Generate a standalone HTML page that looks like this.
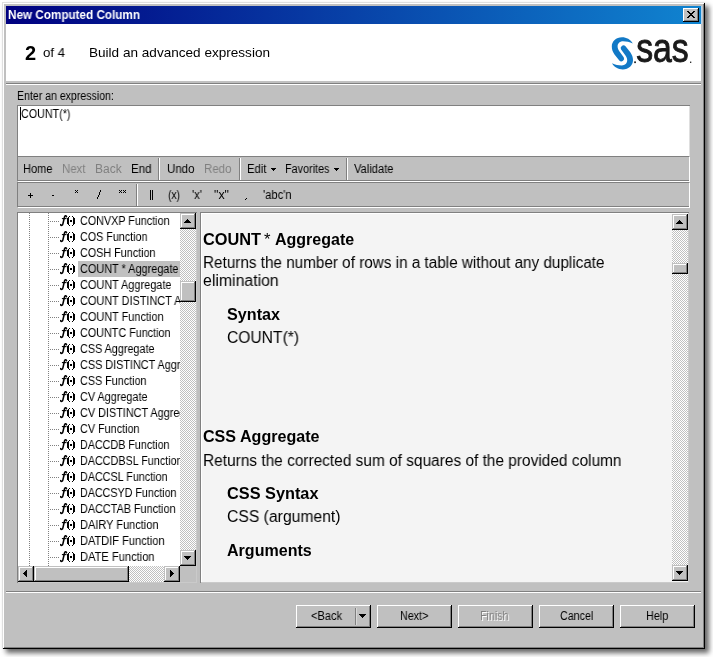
<!DOCTYPE html><html><head><meta charset="utf-8"><title>New Computed Column</title><style>
*{box-sizing:border-box;margin:0;padding:0}
html,body{width:713px;height:657px;overflow:hidden;background:#fff}
body{position:relative;font-family:"Liberation Sans",sans-serif;font-size:12px;color:#000}
.abs{position:absolute}
#win{position:absolute;left:2px;top:2px;width:703px;height:647px;background:#c0c0c0;
 box-shadow:inset 1px 1px 0 #dfdfdf,inset -1px -1px 0 #000,inset 2px 2px 0 #fff,inset -2px -2px 0 #808080, 4px 4px 5px rgba(0,0,0,.6)}
#title{position:absolute;left:6px;top:6px;width:695px;height:18px;background:linear-gradient(90deg,#000080 0%,#1084d0 100%)}
.t{position:absolute;white-space:pre;transform-origin:0 0;will-change:transform}
.btn{position:absolute;background:#c0c0c0;box-shadow:inset -1px -1px 0 #000,inset 1px 1px 0 #fff,inset -2px -2px 0 #808080}
.sbtn{position:absolute;width:16px;height:16px;background:#c0c0c0;box-shadow:inset -1px -1px 0 #000,inset 1px 1px 0 #c0c0c0,inset -2px -2px 0 #808080,inset 2px 2px 0 #fff}
.track{position:absolute;background-image:conic-gradient(#fff 25%,#c0c0c0 0 50%,#fff 0 75%,#c0c0c0 0);background-size:2px 2px}
.hl{position:absolute;height:1px;background:#808080}
.wl{position:absolute;height:1px;background:#fff}
.vs{position:absolute;width:2px;border-left:1px solid #808080;border-right:1px solid #fff}
.dot{position:absolute;height:1px;background-image:linear-gradient(90deg,#808080 50%,transparent 0);background-size:2px 1px}
.vd{position:absolute;width:1px;background-image:linear-gradient(180deg,#808080 50%,transparent 0);background-size:1px 2px}
.ic{position:absolute}
</style></head><body>
<div id="win"></div>
<div id="title"></div><div class="abs" style="left:701px;top:6px;width:1px;height:18px;background:#b4d4ee"></div>
<div class="t" style="left:8px;top:8px;font-size:12px;line-height:14px;font-weight:bold;color:#fff;transform:scaleX(0.9754);">New Computed Column</div>
<div class="btn" style="left:683px;top:8px;width:16px;height:14px"><svg class="abs" style="left:4px;top:3px" width="8" height="7" shape-rendering="crispEdges"><path d="M0 0h2v1h1v1h2v-1h1v-1h2v1h-1v1h-1v1h-1v1h1v1h1v1h1v1h-2v-1h-1v-1h-2v1h-1v1h-2v-1h1v-1h1v-1h1v-1h-1v-1h-1v-1h-1z" fill="#000"/></svg></div>
<div class="abs" style="left:6px;top:24px;width:695px;height:57px;background:#fff"></div>
<div class="hl" style="left:6px;top:83px;width:695px"></div><div class="wl" style="left:6px;top:84px;width:695px"></div>
<div class="t" style="left:25px;top:41px;font-size:20px;line-height:24px;font-weight:bold;">2</div>
<div class="t" style="left:43.2px;top:45px;font-size:13.5px;line-height:16px;transform:scaleX(0.9764);">of 4</div>
<div class="t" style="left:89px;top:45px;font-size:13.5px;line-height:16px;transform:scaleX(1.0049);">Build an advanced expression</div>
<svg class="abs" style="left:0;top:0;will-change:transform" width="713" height="90" viewBox="0 0 713 90"><g fill="#1279c6"><path d="M632.8 43.5C630.5 39.5 626.5 37.3 622 37.3C616 37.3 611.8 41.5 611.8 46.5C611.8 49.5 612.8 52 614.5 54.5L619.3 60.6A2.8 2.8 0 0 0 623.7 57.2L619.5 51.5C618.3 49.9 617.6 48.3 617.6 46.5C617.6 43.5 619.8 41.3 623 41.3C626.5 41.3 629.5 42 632.8 43.5Z"/><path d="M632.8 43.5C630.5 39.5 626.5 37.3 622 37.3C616 37.3 611.8 41.5 611.8 46.5C611.8 49.5 612.8 52 614.5 54.5L619.3 60.6A2.8 2.8 0 0 0 623.7 57.2L619.5 51.5C618.3 49.9 617.6 48.3 617.6 46.5C617.6 43.5 619.8 41.3 623 41.3C626.5 41.3 629.5 42 632.8 43.5Z" transform="rotate(180 622.4 53.4)"/></g><text x="636.2" y="62.4" font-family="Liberation Sans" font-size="40" fill="#1a1a1a" stroke="#1a1a1a" stroke-width="0.9" textLength="52.5" lengthAdjust="spacingAndGlyphs">sas</text><rect x="634.2" y="61.4" width="1.7" height="1.7" fill="#1a1a1a"/><rect x="690" y="61.6" width="1.3" height="1.3" fill="#1a1a1a"/></svg>
<div class="t" style="left:17px;top:89px;font-size:12px;line-height:14px;transform:scaleX(0.8795);">Enter an expression:</div>
<div class="abs" style="left:17px;top:105px;width:673px;height:51px;background:#fff;box-shadow:inset 1px 1px 0 #808080,inset -1px 0 0 #dfdfdf"></div>
<div class="abs" style="left:20px;top:107px;width:1px;height:13px;background:#000"></div>
<div class="t" style="left:20.7px;top:107px;font-size:12px;line-height:14px;transform:scaleX(0.8947);">COUNT(*)</div>
<div class="abs" style="left:17px;top:156px;width:673px;height:26px;border-left:1px solid #808080;border-top:1px solid #808080;border-bottom:1px solid #fff;border-right:1px solid #fff"><div class="hl" style="left:0;bottom:0;width:100%"></div></div>
<div class="abs" style="left:17px;top:182px;width:673px;height:26px;border-left:1px solid #808080;border-top:1px solid #808080;border-bottom:1px solid #fff;border-right:1px solid #fff"><div class="hl" style="left:0;bottom:0;width:100%"></div></div>
<div class="t" style="left:22.5px;top:162px;font-size:12px;line-height:14px;transform:scaleX(0.9214);">Home</div>
<div class="t" style="left:61.5px;top:162px;font-size:12px;line-height:14px;color:#808080;transform:scaleX(0.9519);">Next</div>
<div class="t" style="left:94.5px;top:162px;font-size:12px;line-height:14px;color:#808080;transform:scaleX(0.9930);">Back</div>
<div class="t" style="left:130.5px;top:162px;font-size:12px;line-height:14px;transform:scaleX(0.9598);">End</div>
<div class="t" style="left:166.5px;top:162px;font-size:12px;line-height:14px;transform:scaleX(0.9586);">Undo</div>
<div class="t" style="left:203.5px;top:162px;font-size:12px;line-height:14px;color:#808080;transform:scaleX(0.9586);">Redo</div>
<div class="t" style="left:246.5px;top:162px;font-size:12px;line-height:14px;transform:scaleX(0.9426);">Edit</div>
<div class="t" style="left:284.5px;top:162px;font-size:12px;line-height:14px;transform:scaleX(0.9016);">Favorites</div>
<div class="t" style="left:353.5px;top:162px;font-size:12px;line-height:14px;transform:scaleX(0.9298);">Validate</div>
<div class="vs" style="left:158px;top:158px;height:22px"></div>
<div class="vs" style="left:239px;top:158px;height:22px"></div>
<div class="vs" style="left:346px;top:158px;height:22px"></div>
<svg class="abs" style="left:271px;top:168px" width="5" height="3" shape-rendering="crispEdges"><rect width="5" height="1"/><rect x="1" y="1" width="3" height="1"/><rect x="2" y="2" width="1" height="1"/></svg>
<svg class="abs" style="left:334px;top:168px" width="5" height="3" shape-rendering="crispEdges"><rect width="5" height="1"/><rect x="1" y="1" width="3" height="1"/><rect x="2" y="2" width="1" height="1"/></svg>
<svg class="abs" style="left:28px;top:193px" width="5" height="5" fill="#000" shape-rendering="crispEdges"><rect x="2" y="0" width="1" height="1"/><rect x="2" y="1" width="1" height="1"/><rect x="0" y="2" width="5" height="1"/><rect x="2" y="3" width="1" height="1"/><rect x="2" y="4" width="1" height="1"/></svg>
<svg class="abs" style="left:52px;top:195px" width="2" height="1" fill="#000" shape-rendering="crispEdges"><rect x="0" y="0" width="2" height="1"/></svg>
<svg class="abs" style="left:75px;top:190px" width="3" height="3" fill="#000" shape-rendering="crispEdges"><rect x="0" y="0" width="1" height="1"/><rect x="2" y="0" width="1" height="1"/><rect x="1" y="1" width="1" height="1"/><rect x="0" y="2" width="1" height="1"/><rect x="2" y="2" width="1" height="1"/></svg>
<svg class="abs" style="left:97px;top:190px" width="4" height="9" fill="#000" shape-rendering="crispEdges"><rect x="3" y="0" width="1" height="1"/><rect x="3" y="1" width="1" height="1"/><rect x="2" y="2" width="1" height="1"/><rect x="2" y="3" width="1" height="1"/><rect x="2" y="4" width="1" height="1"/><rect x="1" y="5" width="1" height="1"/><rect x="1" y="6" width="1" height="1"/><rect x="0" y="7" width="1" height="1"/><rect x="0" y="8" width="1" height="1"/></svg>
<svg class="abs" style="left:119px;top:190px" width="7" height="3" fill="#000" shape-rendering="crispEdges"><rect x="0" y="0" width="1" height="1"/><rect x="2" y="0" width="1" height="1"/><rect x="4" y="0" width="1" height="1"/><rect x="6" y="0" width="1" height="1"/><rect x="1" y="1" width="1" height="1"/><rect x="5" y="1" width="1" height="1"/><rect x="0" y="2" width="1" height="1"/><rect x="2" y="2" width="1" height="1"/><rect x="4" y="2" width="1" height="1"/><rect x="6" y="2" width="1" height="1"/></svg>
<svg class="abs" style="left:150px;top:190px" width="3" height="10" fill="#000" shape-rendering="crispEdges"><rect x="0" y="0" width="1" height="1"/><rect x="2" y="0" width="1" height="1"/><rect x="0" y="1" width="1" height="1"/><rect x="2" y="1" width="1" height="1"/><rect x="0" y="2" width="1" height="1"/><rect x="2" y="2" width="1" height="1"/><rect x="0" y="3" width="1" height="1"/><rect x="2" y="3" width="1" height="1"/><rect x="0" y="4" width="1" height="1"/><rect x="2" y="4" width="1" height="1"/><rect x="0" y="5" width="1" height="1"/><rect x="2" y="5" width="1" height="1"/><rect x="0" y="6" width="1" height="1"/><rect x="2" y="6" width="1" height="1"/><rect x="0" y="7" width="1" height="1"/><rect x="2" y="7" width="1" height="1"/><rect x="0" y="8" width="1" height="1"/><rect x="2" y="8" width="1" height="1"/><rect x="0" y="9" width="1" height="1"/><rect x="2" y="9" width="1" height="1"/></svg>
<svg class="abs" style="left:245px;top:198px" width="2" height="2" fill="#000" shape-rendering="crispEdges"><rect x="1" y="0" width="1" height="1"/><rect x="0" y="1" width="1" height="1"/></svg>
<div class="t" style="left:168px;top:188px;font-size:12px;line-height:14px;transform:scaleX(0.8571);">(x)</div>
<div class="t" style="left:192px;top:188px;font-size:12px;line-height:14px;transform:scaleX(0.9440);">'x'</div>
<div class="t" style="left:213.5px;top:188px;font-size:12px;line-height:14px;transform:scaleX(1.0323);">"x"</div>
<div class="t" style="left:262.5px;top:188px;font-size:12px;line-height:14px;transform:scaleX(0.9311);">'abc'n</div>
<div class="vs" style="left:136px;top:184px;height:22px"></div>
<div class="abs" style="left:17px;top:212px;width:180px;height:371px;background:#fff;box-shadow:inset 1px 1px 0 #808080,inset -1px -1px 0 #cacaca"></div>
<div class="abs" style="left:18px;top:213px;width:162px;height:353px;overflow:hidden">
<div class="vd" style="left:11px;top:0;height:353px"></div><div class="vd" style="left:30px;top:0;height:353px"></div>
<div class="dot" style="left:32px;top:8px;width:9px"></div>
<svg class="ic" style="left:42px;top:2px;will-change:transform" width="16" height="12" viewBox="0 0 16 12"><path d="M6.5 1.7C6.3 0.5 4.9 0.3 4.5 2L2.9 8.8C2.5 10.7 1.1 10.8 0.6 9.6" stroke="#000" stroke-width="1.55" fill="none" stroke-linecap="round"/><path d="M1.9 3.6H6.5" stroke="#000" stroke-width="1.1" fill="none"/><g shape-rendering="crispEdges"><rect x="9" y="1" width="1" height="1"/><rect x="8" y="2" width="1" height="1"/><rect x="7" y="3" width="2" height="6"/><rect x="8" y="9" width="1" height="1"/><rect x="9" y="10" width="1" height="1"/><rect x="12" y="1" width="1" height="1"/><rect x="13" y="2" width="1" height="1"/><rect x="13" y="3" width="2" height="6"/><rect x="13" y="9" width="1" height="1"/><rect x="12" y="10" width="1" height="1"/><rect x="10" y="5" width="2" height="2"/></g></svg>
<div class="t" style="left:62px;top:1px;font-size:12px;line-height:14px;transform:scaleX(0.8965);">CONVXP Function</div>
<div class="dot" style="left:32px;top:24px;width:9px"></div>
<svg class="ic" style="left:42px;top:18px;will-change:transform" width="16" height="12" viewBox="0 0 16 12"><path d="M6.5 1.7C6.3 0.5 4.9 0.3 4.5 2L2.9 8.8C2.5 10.7 1.1 10.8 0.6 9.6" stroke="#000" stroke-width="1.55" fill="none" stroke-linecap="round"/><path d="M1.9 3.6H6.5" stroke="#000" stroke-width="1.1" fill="none"/><g shape-rendering="crispEdges"><rect x="9" y="1" width="1" height="1"/><rect x="8" y="2" width="1" height="1"/><rect x="7" y="3" width="2" height="6"/><rect x="8" y="9" width="1" height="1"/><rect x="9" y="10" width="1" height="1"/><rect x="12" y="1" width="1" height="1"/><rect x="13" y="2" width="1" height="1"/><rect x="13" y="3" width="2" height="6"/><rect x="13" y="9" width="1" height="1"/><rect x="12" y="10" width="1" height="1"/><rect x="10" y="5" width="2" height="2"/></g></svg>
<div class="t" style="left:62px;top:17px;font-size:12px;line-height:14px;transform:scaleX(0.8955);">COS Function</div>
<div class="dot" style="left:32px;top:40px;width:9px"></div>
<svg class="ic" style="left:42px;top:34px;will-change:transform" width="16" height="12" viewBox="0 0 16 12"><path d="M6.5 1.7C6.3 0.5 4.9 0.3 4.5 2L2.9 8.8C2.5 10.7 1.1 10.8 0.6 9.6" stroke="#000" stroke-width="1.55" fill="none" stroke-linecap="round"/><path d="M1.9 3.6H6.5" stroke="#000" stroke-width="1.1" fill="none"/><g shape-rendering="crispEdges"><rect x="9" y="1" width="1" height="1"/><rect x="8" y="2" width="1" height="1"/><rect x="7" y="3" width="2" height="6"/><rect x="8" y="9" width="1" height="1"/><rect x="9" y="10" width="1" height="1"/><rect x="12" y="1" width="1" height="1"/><rect x="13" y="2" width="1" height="1"/><rect x="13" y="3" width="2" height="6"/><rect x="13" y="9" width="1" height="1"/><rect x="12" y="10" width="1" height="1"/><rect x="10" y="5" width="2" height="2"/></g></svg>
<div class="t" style="left:62px;top:33px;font-size:12px;line-height:14px;transform:scaleX(0.8985);">COSH Function</div>
<div class="dot" style="left:32px;top:56px;width:9px"></div>
<svg class="ic" style="left:42px;top:50px;will-change:transform" width="16" height="12" viewBox="0 0 16 12"><path d="M6.5 1.7C6.3 0.5 4.9 0.3 4.5 2L2.9 8.8C2.5 10.7 1.1 10.8 0.6 9.6" stroke="#000" stroke-width="1.55" fill="none" stroke-linecap="round"/><path d="M1.9 3.6H6.5" stroke="#000" stroke-width="1.1" fill="none"/><g shape-rendering="crispEdges"><rect x="9" y="1" width="1" height="1"/><rect x="8" y="2" width="1" height="1"/><rect x="7" y="3" width="2" height="6"/><rect x="8" y="9" width="1" height="1"/><rect x="9" y="10" width="1" height="1"/><rect x="12" y="1" width="1" height="1"/><rect x="13" y="2" width="1" height="1"/><rect x="13" y="3" width="2" height="6"/><rect x="13" y="9" width="1" height="1"/><rect x="12" y="10" width="1" height="1"/><rect x="10" y="5" width="2" height="2"/></g></svg>
<div class="abs" style="left:60px;top:48px;width:110px;height:16px;background:#c0c0c0"></div>
<div class="t" style="left:62px;top:49px;font-size:12px;line-height:14px;transform:scaleX(0.9078);">COUNT * Aggregate</div>
<div class="dot" style="left:32px;top:72px;width:9px"></div>
<svg class="ic" style="left:42px;top:66px;will-change:transform" width="16" height="12" viewBox="0 0 16 12"><path d="M6.5 1.7C6.3 0.5 4.9 0.3 4.5 2L2.9 8.8C2.5 10.7 1.1 10.8 0.6 9.6" stroke="#000" stroke-width="1.55" fill="none" stroke-linecap="round"/><path d="M1.9 3.6H6.5" stroke="#000" stroke-width="1.1" fill="none"/><g shape-rendering="crispEdges"><rect x="9" y="1" width="1" height="1"/><rect x="8" y="2" width="1" height="1"/><rect x="7" y="3" width="2" height="6"/><rect x="8" y="9" width="1" height="1"/><rect x="9" y="10" width="1" height="1"/><rect x="12" y="1" width="1" height="1"/><rect x="13" y="2" width="1" height="1"/><rect x="13" y="3" width="2" height="6"/><rect x="13" y="9" width="1" height="1"/><rect x="12" y="10" width="1" height="1"/><rect x="10" y="5" width="2" height="2"/></g></svg>
<div class="t" style="left:62px;top:65px;font-size:12px;line-height:14px;transform:scaleX(0.9104);">COUNT Aggregate</div>
<div class="dot" style="left:32px;top:88px;width:9px"></div>
<svg class="ic" style="left:42px;top:82px;will-change:transform" width="16" height="12" viewBox="0 0 16 12"><path d="M6.5 1.7C6.3 0.5 4.9 0.3 4.5 2L2.9 8.8C2.5 10.7 1.1 10.8 0.6 9.6" stroke="#000" stroke-width="1.55" fill="none" stroke-linecap="round"/><path d="M1.9 3.6H6.5" stroke="#000" stroke-width="1.1" fill="none"/><g shape-rendering="crispEdges"><rect x="9" y="1" width="1" height="1"/><rect x="8" y="2" width="1" height="1"/><rect x="7" y="3" width="2" height="6"/><rect x="8" y="9" width="1" height="1"/><rect x="9" y="10" width="1" height="1"/><rect x="12" y="1" width="1" height="1"/><rect x="13" y="2" width="1" height="1"/><rect x="13" y="3" width="2" height="6"/><rect x="13" y="9" width="1" height="1"/><rect x="12" y="10" width="1" height="1"/><rect x="10" y="5" width="2" height="2"/></g></svg>
<div class="t" style="left:62px;top:81px;font-size:12px;line-height:14px;transform:scaleX(0.9091);">COUNT DISTINCT Aggregate</div>
<div class="dot" style="left:32px;top:104px;width:9px"></div>
<svg class="ic" style="left:42px;top:98px;will-change:transform" width="16" height="12" viewBox="0 0 16 12"><path d="M6.5 1.7C6.3 0.5 4.9 0.3 4.5 2L2.9 8.8C2.5 10.7 1.1 10.8 0.6 9.6" stroke="#000" stroke-width="1.55" fill="none" stroke-linecap="round"/><path d="M1.9 3.6H6.5" stroke="#000" stroke-width="1.1" fill="none"/><g shape-rendering="crispEdges"><rect x="9" y="1" width="1" height="1"/><rect x="8" y="2" width="1" height="1"/><rect x="7" y="3" width="2" height="6"/><rect x="8" y="9" width="1" height="1"/><rect x="9" y="10" width="1" height="1"/><rect x="12" y="1" width="1" height="1"/><rect x="13" y="2" width="1" height="1"/><rect x="13" y="3" width="2" height="6"/><rect x="13" y="9" width="1" height="1"/><rect x="12" y="10" width="1" height="1"/><rect x="10" y="5" width="2" height="2"/></g></svg>
<div class="t" style="left:62px;top:97px;font-size:12px;line-height:14px;transform:scaleX(0.9095);">COUNT Function</div>
<div class="dot" style="left:32px;top:120px;width:9px"></div>
<svg class="ic" style="left:42px;top:114px;will-change:transform" width="16" height="12" viewBox="0 0 16 12"><path d="M6.5 1.7C6.3 0.5 4.9 0.3 4.5 2L2.9 8.8C2.5 10.7 1.1 10.8 0.6 9.6" stroke="#000" stroke-width="1.55" fill="none" stroke-linecap="round"/><path d="M1.9 3.6H6.5" stroke="#000" stroke-width="1.1" fill="none"/><g shape-rendering="crispEdges"><rect x="9" y="1" width="1" height="1"/><rect x="8" y="2" width="1" height="1"/><rect x="7" y="3" width="2" height="6"/><rect x="8" y="9" width="1" height="1"/><rect x="9" y="10" width="1" height="1"/><rect x="12" y="1" width="1" height="1"/><rect x="13" y="2" width="1" height="1"/><rect x="13" y="3" width="2" height="6"/><rect x="13" y="9" width="1" height="1"/><rect x="12" y="10" width="1" height="1"/><rect x="10" y="5" width="2" height="2"/></g></svg>
<div class="t" style="left:62px;top:113px;font-size:12px;line-height:14px;transform:scaleX(0.8988);">COUNTC Function</div>
<div class="dot" style="left:32px;top:136px;width:9px"></div>
<svg class="ic" style="left:42px;top:130px;will-change:transform" width="16" height="12" viewBox="0 0 16 12"><path d="M6.5 1.7C6.3 0.5 4.9 0.3 4.5 2L2.9 8.8C2.5 10.7 1.1 10.8 0.6 9.6" stroke="#000" stroke-width="1.55" fill="none" stroke-linecap="round"/><path d="M1.9 3.6H6.5" stroke="#000" stroke-width="1.1" fill="none"/><g shape-rendering="crispEdges"><rect x="9" y="1" width="1" height="1"/><rect x="8" y="2" width="1" height="1"/><rect x="7" y="3" width="2" height="6"/><rect x="8" y="9" width="1" height="1"/><rect x="9" y="10" width="1" height="1"/><rect x="12" y="1" width="1" height="1"/><rect x="13" y="2" width="1" height="1"/><rect x="13" y="3" width="2" height="6"/><rect x="13" y="9" width="1" height="1"/><rect x="12" y="10" width="1" height="1"/><rect x="10" y="5" width="2" height="2"/></g></svg>
<div class="t" style="left:62px;top:129px;font-size:12px;line-height:14px;transform:scaleX(0.9005);">CSS Aggregate</div>
<div class="dot" style="left:32px;top:152px;width:9px"></div>
<svg class="ic" style="left:42px;top:146px;will-change:transform" width="16" height="12" viewBox="0 0 16 12"><path d="M6.5 1.7C6.3 0.5 4.9 0.3 4.5 2L2.9 8.8C2.5 10.7 1.1 10.8 0.6 9.6" stroke="#000" stroke-width="1.55" fill="none" stroke-linecap="round"/><path d="M1.9 3.6H6.5" stroke="#000" stroke-width="1.1" fill="none"/><g shape-rendering="crispEdges"><rect x="9" y="1" width="1" height="1"/><rect x="8" y="2" width="1" height="1"/><rect x="7" y="3" width="2" height="6"/><rect x="8" y="9" width="1" height="1"/><rect x="9" y="10" width="1" height="1"/><rect x="12" y="1" width="1" height="1"/><rect x="13" y="2" width="1" height="1"/><rect x="13" y="3" width="2" height="6"/><rect x="13" y="9" width="1" height="1"/><rect x="12" y="10" width="1" height="1"/><rect x="10" y="5" width="2" height="2"/></g></svg>
<div class="t" style="left:62px;top:145px;font-size:12px;line-height:14px;transform:scaleX(0.9032);">CSS DISTINCT Aggregate</div>
<div class="dot" style="left:32px;top:168px;width:9px"></div>
<svg class="ic" style="left:42px;top:162px;will-change:transform" width="16" height="12" viewBox="0 0 16 12"><path d="M6.5 1.7C6.3 0.5 4.9 0.3 4.5 2L2.9 8.8C2.5 10.7 1.1 10.8 0.6 9.6" stroke="#000" stroke-width="1.55" fill="none" stroke-linecap="round"/><path d="M1.9 3.6H6.5" stroke="#000" stroke-width="1.1" fill="none"/><g shape-rendering="crispEdges"><rect x="9" y="1" width="1" height="1"/><rect x="8" y="2" width="1" height="1"/><rect x="7" y="3" width="2" height="6"/><rect x="8" y="9" width="1" height="1"/><rect x="9" y="10" width="1" height="1"/><rect x="12" y="1" width="1" height="1"/><rect x="13" y="2" width="1" height="1"/><rect x="13" y="3" width="2" height="6"/><rect x="13" y="9" width="1" height="1"/><rect x="12" y="10" width="1" height="1"/><rect x="10" y="5" width="2" height="2"/></g></svg>
<div class="t" style="left:62px;top:161px;font-size:12px;line-height:14px;transform:scaleX(0.8981);">CSS Function</div>
<div class="dot" style="left:32px;top:184px;width:9px"></div>
<svg class="ic" style="left:42px;top:178px;will-change:transform" width="16" height="12" viewBox="0 0 16 12"><path d="M6.5 1.7C6.3 0.5 4.9 0.3 4.5 2L2.9 8.8C2.5 10.7 1.1 10.8 0.6 9.6" stroke="#000" stroke-width="1.55" fill="none" stroke-linecap="round"/><path d="M1.9 3.6H6.5" stroke="#000" stroke-width="1.1" fill="none"/><g shape-rendering="crispEdges"><rect x="9" y="1" width="1" height="1"/><rect x="8" y="2" width="1" height="1"/><rect x="7" y="3" width="2" height="6"/><rect x="8" y="9" width="1" height="1"/><rect x="9" y="10" width="1" height="1"/><rect x="12" y="1" width="1" height="1"/><rect x="13" y="2" width="1" height="1"/><rect x="13" y="3" width="2" height="6"/><rect x="13" y="9" width="1" height="1"/><rect x="12" y="10" width="1" height="1"/><rect x="10" y="5" width="2" height="2"/></g></svg>
<div class="t" style="left:62px;top:177px;font-size:12px;line-height:14px;transform:scaleX(0.9034);">CV Aggregate</div>
<div class="dot" style="left:32px;top:200px;width:9px"></div>
<svg class="ic" style="left:42px;top:194px;will-change:transform" width="16" height="12" viewBox="0 0 16 12"><path d="M6.5 1.7C6.3 0.5 4.9 0.3 4.5 2L2.9 8.8C2.5 10.7 1.1 10.8 0.6 9.6" stroke="#000" stroke-width="1.55" fill="none" stroke-linecap="round"/><path d="M1.9 3.6H6.5" stroke="#000" stroke-width="1.1" fill="none"/><g shape-rendering="crispEdges"><rect x="9" y="1" width="1" height="1"/><rect x="8" y="2" width="1" height="1"/><rect x="7" y="3" width="2" height="6"/><rect x="8" y="9" width="1" height="1"/><rect x="9" y="10" width="1" height="1"/><rect x="12" y="1" width="1" height="1"/><rect x="13" y="2" width="1" height="1"/><rect x="13" y="3" width="2" height="6"/><rect x="13" y="9" width="1" height="1"/><rect x="12" y="10" width="1" height="1"/><rect x="10" y="5" width="2" height="2"/></g></svg>
<div class="t" style="left:62px;top:193px;font-size:12px;line-height:14px;transform:scaleX(0.9048);">CV DISTINCT Aggregate</div>
<div class="dot" style="left:32px;top:216px;width:9px"></div>
<svg class="ic" style="left:42px;top:210px;will-change:transform" width="16" height="12" viewBox="0 0 16 12"><path d="M6.5 1.7C6.3 0.5 4.9 0.3 4.5 2L2.9 8.8C2.5 10.7 1.1 10.8 0.6 9.6" stroke="#000" stroke-width="1.55" fill="none" stroke-linecap="round"/><path d="M1.9 3.6H6.5" stroke="#000" stroke-width="1.1" fill="none"/><g shape-rendering="crispEdges"><rect x="9" y="1" width="1" height="1"/><rect x="8" y="2" width="1" height="1"/><rect x="7" y="3" width="2" height="6"/><rect x="8" y="9" width="1" height="1"/><rect x="9" y="10" width="1" height="1"/><rect x="12" y="1" width="1" height="1"/><rect x="13" y="2" width="1" height="1"/><rect x="13" y="3" width="2" height="6"/><rect x="13" y="9" width="1" height="1"/><rect x="12" y="10" width="1" height="1"/><rect x="10" y="5" width="2" height="2"/></g></svg>
<div class="t" style="left:62px;top:209px;font-size:12px;line-height:14px;transform:scaleX(0.9011);">CV Function</div>
<div class="dot" style="left:32px;top:232px;width:9px"></div>
<svg class="ic" style="left:42px;top:226px;will-change:transform" width="16" height="12" viewBox="0 0 16 12"><path d="M6.5 1.7C6.3 0.5 4.9 0.3 4.5 2L2.9 8.8C2.5 10.7 1.1 10.8 0.6 9.6" stroke="#000" stroke-width="1.55" fill="none" stroke-linecap="round"/><path d="M1.9 3.6H6.5" stroke="#000" stroke-width="1.1" fill="none"/><g shape-rendering="crispEdges"><rect x="9" y="1" width="1" height="1"/><rect x="8" y="2" width="1" height="1"/><rect x="7" y="3" width="2" height="6"/><rect x="8" y="9" width="1" height="1"/><rect x="9" y="10" width="1" height="1"/><rect x="12" y="1" width="1" height="1"/><rect x="13" y="2" width="1" height="1"/><rect x="13" y="3" width="2" height="6"/><rect x="13" y="9" width="1" height="1"/><rect x="12" y="10" width="1" height="1"/><rect x="10" y="5" width="2" height="2"/></g></svg>
<div class="t" style="left:62px;top:225px;font-size:12px;line-height:14px;transform:scaleX(0.8947);">DACCDB Function</div>
<div class="dot" style="left:32px;top:248px;width:9px"></div>
<svg class="ic" style="left:42px;top:242px;will-change:transform" width="16" height="12" viewBox="0 0 16 12"><path d="M6.5 1.7C6.3 0.5 4.9 0.3 4.5 2L2.9 8.8C2.5 10.7 1.1 10.8 0.6 9.6" stroke="#000" stroke-width="1.55" fill="none" stroke-linecap="round"/><path d="M1.9 3.6H6.5" stroke="#000" stroke-width="1.1" fill="none"/><g shape-rendering="crispEdges"><rect x="9" y="1" width="1" height="1"/><rect x="8" y="2" width="1" height="1"/><rect x="7" y="3" width="2" height="6"/><rect x="8" y="9" width="1" height="1"/><rect x="9" y="10" width="1" height="1"/><rect x="12" y="1" width="1" height="1"/><rect x="13" y="2" width="1" height="1"/><rect x="13" y="3" width="2" height="6"/><rect x="13" y="9" width="1" height="1"/><rect x="12" y="10" width="1" height="1"/><rect x="10" y="5" width="2" height="2"/></g></svg>
<div class="t" style="left:62px;top:241px;font-size:12px;line-height:14px;transform:scaleX(0.8970);">DACCDBSL Function</div>
<div class="dot" style="left:32px;top:264px;width:9px"></div>
<svg class="ic" style="left:42px;top:258px;will-change:transform" width="16" height="12" viewBox="0 0 16 12"><path d="M6.5 1.7C6.3 0.5 4.9 0.3 4.5 2L2.9 8.8C2.5 10.7 1.1 10.8 0.6 9.6" stroke="#000" stroke-width="1.55" fill="none" stroke-linecap="round"/><path d="M1.9 3.6H6.5" stroke="#000" stroke-width="1.1" fill="none"/><g shape-rendering="crispEdges"><rect x="9" y="1" width="1" height="1"/><rect x="8" y="2" width="1" height="1"/><rect x="7" y="3" width="2" height="6"/><rect x="8" y="9" width="1" height="1"/><rect x="9" y="10" width="1" height="1"/><rect x="12" y="1" width="1" height="1"/><rect x="13" y="2" width="1" height="1"/><rect x="13" y="3" width="2" height="6"/><rect x="13" y="9" width="1" height="1"/><rect x="12" y="10" width="1" height="1"/><rect x="10" y="5" width="2" height="2"/></g></svg>
<div class="t" style="left:62px;top:257px;font-size:12px;line-height:14px;transform:scaleX(0.8966);">DACCSL Function</div>
<div class="dot" style="left:32px;top:280px;width:9px"></div>
<svg class="ic" style="left:42px;top:274px;will-change:transform" width="16" height="12" viewBox="0 0 16 12"><path d="M6.5 1.7C6.3 0.5 4.9 0.3 4.5 2L2.9 8.8C2.5 10.7 1.1 10.8 0.6 9.6" stroke="#000" stroke-width="1.55" fill="none" stroke-linecap="round"/><path d="M1.9 3.6H6.5" stroke="#000" stroke-width="1.1" fill="none"/><g shape-rendering="crispEdges"><rect x="9" y="1" width="1" height="1"/><rect x="8" y="2" width="1" height="1"/><rect x="7" y="3" width="2" height="6"/><rect x="8" y="9" width="1" height="1"/><rect x="9" y="10" width="1" height="1"/><rect x="12" y="1" width="1" height="1"/><rect x="13" y="2" width="1" height="1"/><rect x="13" y="3" width="2" height="6"/><rect x="13" y="9" width="1" height="1"/><rect x="12" y="10" width="1" height="1"/><rect x="10" y="5" width="2" height="2"/></g></svg>
<div class="t" style="left:62px;top:273px;font-size:12px;line-height:14px;transform:scaleX(0.8931);">DACCSYD Function</div>
<div class="dot" style="left:32px;top:296px;width:9px"></div>
<svg class="ic" style="left:42px;top:290px;will-change:transform" width="16" height="12" viewBox="0 0 16 12"><path d="M6.5 1.7C6.3 0.5 4.9 0.3 4.5 2L2.9 8.8C2.5 10.7 1.1 10.8 0.6 9.6" stroke="#000" stroke-width="1.55" fill="none" stroke-linecap="round"/><path d="M1.9 3.6H6.5" stroke="#000" stroke-width="1.1" fill="none"/><g shape-rendering="crispEdges"><rect x="9" y="1" width="1" height="1"/><rect x="8" y="2" width="1" height="1"/><rect x="7" y="3" width="2" height="6"/><rect x="8" y="9" width="1" height="1"/><rect x="9" y="10" width="1" height="1"/><rect x="12" y="1" width="1" height="1"/><rect x="13" y="2" width="1" height="1"/><rect x="13" y="3" width="2" height="6"/><rect x="13" y="9" width="1" height="1"/><rect x="12" y="10" width="1" height="1"/><rect x="10" y="5" width="2" height="2"/></g></svg>
<div class="t" style="left:62px;top:289px;font-size:12px;line-height:14px;transform:scaleX(0.9025);">DACCTAB Function</div>
<div class="dot" style="left:32px;top:312px;width:9px"></div>
<svg class="ic" style="left:42px;top:306px;will-change:transform" width="16" height="12" viewBox="0 0 16 12"><path d="M6.5 1.7C6.3 0.5 4.9 0.3 4.5 2L2.9 8.8C2.5 10.7 1.1 10.8 0.6 9.6" stroke="#000" stroke-width="1.55" fill="none" stroke-linecap="round"/><path d="M1.9 3.6H6.5" stroke="#000" stroke-width="1.1" fill="none"/><g shape-rendering="crispEdges"><rect x="9" y="1" width="1" height="1"/><rect x="8" y="2" width="1" height="1"/><rect x="7" y="3" width="2" height="6"/><rect x="8" y="9" width="1" height="1"/><rect x="9" y="10" width="1" height="1"/><rect x="12" y="1" width="1" height="1"/><rect x="13" y="2" width="1" height="1"/><rect x="13" y="3" width="2" height="6"/><rect x="13" y="9" width="1" height="1"/><rect x="12" y="10" width="1" height="1"/><rect x="10" y="5" width="2" height="2"/></g></svg>
<div class="t" style="left:62px;top:305px;font-size:12px;line-height:14px;transform:scaleX(0.9170);">DAIRY Function</div>
<div class="dot" style="left:32px;top:328px;width:9px"></div>
<svg class="ic" style="left:42px;top:322px;will-change:transform" width="16" height="12" viewBox="0 0 16 12"><path d="M6.5 1.7C6.3 0.5 4.9 0.3 4.5 2L2.9 8.8C2.5 10.7 1.1 10.8 0.6 9.6" stroke="#000" stroke-width="1.55" fill="none" stroke-linecap="round"/><path d="M1.9 3.6H6.5" stroke="#000" stroke-width="1.1" fill="none"/><g shape-rendering="crispEdges"><rect x="9" y="1" width="1" height="1"/><rect x="8" y="2" width="1" height="1"/><rect x="7" y="3" width="2" height="6"/><rect x="8" y="9" width="1" height="1"/><rect x="9" y="10" width="1" height="1"/><rect x="12" y="1" width="1" height="1"/><rect x="13" y="2" width="1" height="1"/><rect x="13" y="3" width="2" height="6"/><rect x="13" y="9" width="1" height="1"/><rect x="12" y="10" width="1" height="1"/><rect x="10" y="5" width="2" height="2"/></g></svg>
<div class="t" style="left:62px;top:321px;font-size:12px;line-height:14px;transform:scaleX(0.9204);">DATDIF Function</div>
<div class="dot" style="left:32px;top:344px;width:9px"></div>
<svg class="ic" style="left:42px;top:338px;will-change:transform" width="16" height="12" viewBox="0 0 16 12"><path d="M6.5 1.7C6.3 0.5 4.9 0.3 4.5 2L2.9 8.8C2.5 10.7 1.1 10.8 0.6 9.6" stroke="#000" stroke-width="1.55" fill="none" stroke-linecap="round"/><path d="M1.9 3.6H6.5" stroke="#000" stroke-width="1.1" fill="none"/><g shape-rendering="crispEdges"><rect x="9" y="1" width="1" height="1"/><rect x="8" y="2" width="1" height="1"/><rect x="7" y="3" width="2" height="6"/><rect x="8" y="9" width="1" height="1"/><rect x="9" y="10" width="1" height="1"/><rect x="12" y="1" width="1" height="1"/><rect x="13" y="2" width="1" height="1"/><rect x="13" y="3" width="2" height="6"/><rect x="13" y="9" width="1" height="1"/><rect x="12" y="10" width="1" height="1"/><rect x="10" y="5" width="2" height="2"/></g></svg>
<div class="t" style="left:62px;top:337px;font-size:12px;line-height:14px;transform:scaleX(0.9256);">DATE Function</div>
</div>
<div class="track" style="left:180px;top:213px;width:16px;height:353px;background-position:1px 0"></div>
<div class="sbtn" style="left:180px;top:213px"><svg class="abs" style="left:4px;top:6px" width="7" height="4" fill="#000" shape-rendering="crispEdges"><rect x="3" y="0" width="1" height="1"/><rect x="2" y="1" width="3" height="1"/><rect x="1" y="2" width="5" height="1"/><rect x="0" y="3" width="7" height="1"/></svg></div>
<div class="sbtn" style="left:180px;top:550px"><svg class="abs" style="left:4px;top:6px" width="7" height="4" fill="#000" shape-rendering="crispEdges"><rect x="0" y="0" width="7" height="1"/><rect x="1" y="1" width="5" height="1"/><rect x="2" y="2" width="3" height="1"/><rect x="3" y="3" width="1" height="1"/></svg></div>
<div class="sbtn" style="left:180px;top:281px;height:21px"></div>
<div class="track" style="left:18px;top:566px;width:162px;height:16px"></div>
<div class="sbtn" style="left:18px;top:566px"><svg class="abs" style="left:5px;top:4px" width="4" height="7" fill="#000" shape-rendering="crispEdges"><rect x="0" y="3" width="1" height="1"/><rect x="1" y="2" width="1" height="3"/><rect x="2" y="1" width="1" height="5"/><rect x="3" y="0" width="1" height="7"/></svg></div>
<div class="sbtn" style="left:164px;top:566px"><svg class="abs" style="left:6px;top:4px" width="4" height="7" fill="#000" shape-rendering="crispEdges"><rect x="0" y="0" width="1" height="7"/><rect x="1" y="1" width="1" height="5"/><rect x="2" y="2" width="1" height="3"/><rect x="3" y="3" width="1" height="1"/></svg></div>
<div class="sbtn" style="left:34px;top:566px;width:95px"></div>
<div class="abs" style="left:180px;top:566px;width:16px;height:16px;background:#c0c0c0"></div>
<div class="abs" style="left:200px;top:212px;width:489px;height:371px;background:#f4f4f4;box-shadow:inset 1px 1px 0 #808080,inset -1px -1px 0 #cacaca,inset 2px 2px 0 #fff"></div>
<div class="track" style="left:672px;top:214px;width:16px;height:367px"></div>
<div class="sbtn" style="left:672px;top:214px"><svg class="abs" style="left:4px;top:6px" width="7" height="4" fill="#000" shape-rendering="crispEdges"><rect x="3" y="0" width="1" height="1"/><rect x="2" y="1" width="3" height="1"/><rect x="1" y="2" width="5" height="1"/><rect x="0" y="3" width="7" height="1"/></svg></div>
<div class="sbtn" style="left:672px;top:565px"><svg class="abs" style="left:4px;top:6px" width="7" height="4" fill="#000" shape-rendering="crispEdges"><rect x="0" y="0" width="7" height="1"/><rect x="1" y="1" width="5" height="1"/><rect x="2" y="2" width="3" height="1"/><rect x="3" y="3" width="1" height="1"/></svg></div>
<div class="sbtn" style="left:672px;top:263px;height:11px"></div>
<div class="t" style="left:203px;top:230px;font-size:16px;line-height:19px;font-weight:bold;transform:scaleX(1.0213);">COUNT</div>
<div class="t" style="left:264px;top:230px;font-size:16px;line-height:19px;transform:scaleX(1.0426);">*</div>
<div class="t" style="left:275px;top:230px;font-size:16px;line-height:19px;font-weight:bold;transform:scaleX(0.9959);">Aggregate</div>
<div class="t" style="left:203px;top:253px;font-size:16px;line-height:19px;transform:scaleX(0.9544);">Returns the number of rows in a table without any duplicate</div>
<div class="t" style="left:203px;top:271px;font-size:16px;line-height:19px;transform:scaleX(0.9897);">elimination</div>
<div class="t" style="left:227px;top:305px;font-size:16px;line-height:19px;font-weight:bold;transform:scaleX(1.0101);">Syntax</div>
<div class="t" style="left:227px;top:328px;font-size:16px;line-height:19px;transform:scaleX(0.9761);">COUNT(*)</div>
<div class="t" style="left:203px;top:427px;font-size:16px;line-height:19px;font-weight:bold;transform:scaleX(1.0054);">CSS Aggregate</div>
<div class="t" style="left:203px;top:451px;font-size:16px;line-height:19px;transform:scaleX(0.9643);">Returns the corrected sum of squares of the provided column</div>
<div class="t" style="left:227px;top:484px;font-size:16px;line-height:19px;font-weight:bold;transform:scaleX(1.0188);">CSS Syntax</div>
<div class="t" style="left:227px;top:507px;font-size:16px;line-height:19px;transform:scaleX(0.9819);">CSS (argument)</div>
<div class="t" style="left:227px;top:541px;font-size:16px;line-height:19px;font-weight:bold;transform:scaleX(1.0029);">Arguments</div>
<div class="hl" style="left:6px;top:591px;width:695px"></div><div class="wl" style="left:6px;top:592px;width:695px"></div>
<div class="btn" style="left:296px;top:605px;width:75px;height:23px"></div>
<div class="t" style="left:311px;top:609px;font-size:12px;line-height:14px;transform:scaleX(0.9202);">&lt;Back</div>
<div class="abs" style="left:355px;top:608px;width:1px;height:17px;background:#808080"></div><div class="abs" style="left:356px;top:608px;width:1px;height:17px;background:#d8d8d8"></div>
<svg class="abs" style="left:359px;top:614px" width="7" height="4" fill="#000" shape-rendering="crispEdges"><rect x="0" y="0" width="7" height="1"/><rect x="1" y="1" width="5" height="1"/><rect x="2" y="2" width="3" height="1"/><rect x="3" y="3" width="1" height="1"/></svg>
<div class="btn" style="left:377px;top:605px;width:75px;height:23px"></div>
<div class="t" style="left:400px;top:609px;font-size:12px;line-height:14px;transform:scaleX(0.8931);">Next&gt;</div>
<div class="btn" style="left:458px;top:605px;width:75px;height:23px"></div>
<div class="t" style="left:481px;top:610px;font-size:12px;line-height:14px;color:#fff;transform:scaleX(0.8902);">Finish</div>
<div class="t" style="left:480px;top:609px;font-size:12px;line-height:14px;color:#808080;transform:scaleX(0.8902);">Finish</div>
<div class="btn" style="left:539px;top:605px;width:75px;height:23px"></div>
<div class="t" style="left:560px;top:609px;font-size:12px;line-height:14px;transform:scaleX(0.8913);">Cancel</div>
<div class="btn" style="left:620px;top:605px;width:75px;height:23px"></div>
<div class="t" style="left:646px;top:609px;font-size:12px;line-height:14px;transform:scaleX(0.9033);">Help</div>
</body></html>
